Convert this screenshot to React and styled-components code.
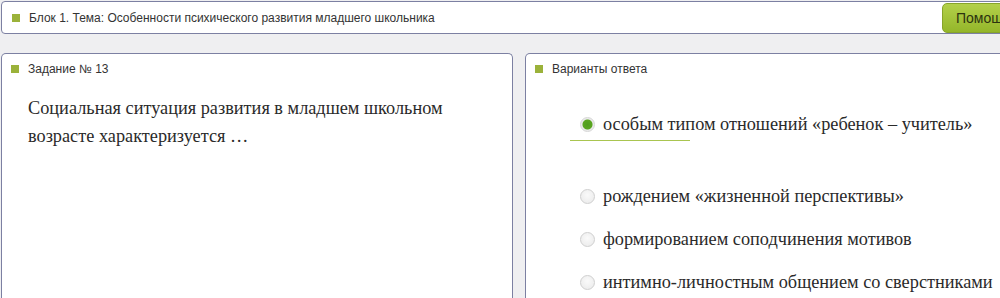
import React from 'react';
import styled, { createGlobalStyle } from 'styled-components';

const GlobalStyle = createGlobalStyle`
    html, body {
        margin: 0;
        padding: 0;
        overflow: hidden;
        background: #efeff1;
    }
    body {
        font-family: "Liberation Sans", Arial, sans-serif;
    }
`;

const Page = styled.div`
    width: 1100px;
    padding: 1px 0 0 1px;
    display: flex;
    flex-direction: column;
    gap: 19px;
`;

const TopBar = styled.div`
    height: 31px;
    display: flex;
    align-items: center;
    background: #fff;
    border: 1px solid #7c80a2;
    border-radius: 4px;
    padding-left: 10px;
    position: relative;
`;

const Square = styled.span`
    width: 8px;
    height: 8px;
    background: #9bb23a;
    flex: none;
`;

const Caption = styled.span`
    margin-left: 9px;
    font-size: 12px;
    color: #333;
`;

const HelpButton = styled.button`
    position: absolute;
    left: 940px;
    top: 1px;
    height: 30px;
    width: 110px;
    padding: 0 0 0 13px;
    text-align: left;
    border: 1px solid #87a42a;
    border-radius: 5px;
    background: linear-gradient(#b3d04a, #94b62a);
    font-family: "Liberation Sans", Arial, sans-serif;
    font-size: 14px;
    color: #2c3310;
`;

const Columns = styled.div`
    display: grid;
    grid-template-columns: 512px 512px;
    gap: 12px;
`;

const Panel = styled.div`
    height: 300px;
    background: #fff;
    border: 1px solid #7c80a2;
    border-bottom: none;
    border-radius: 5px 5px 0 0;
    padding: 9px 0 0 9px;
`;

const PanelHead = styled.div`
    display: flex;
    align-items: center;
    height: 11px;
`;

const Question = styled.p`
    margin: 20px 0 0 17px;
    width: 460px;
    font-family: "Liberation Serif", "Times New Roman", serif;
    font-size: 18.3px;
    line-height: 28px;
    color: #2a2a2a;
`;

const Options = styled.div`
    display: flex;
    flex-direction: column;
    padding: 29px 0 0 45px;
`;

const Option = styled.label`
    position: relative;
    display: flex;
    align-items: center;
    gap: 8px;
    height: 43px;
    margin-bottom: ${p => (p.$gap ? '29px' : '0')};
    font-family: "Liberation Serif", "Times New Roman", serif;
    font-size: 18.3px;
    color: #2a2a2a;
    white-space: nowrap;
`;

const Radio = styled.span`
    width: 13px;
    height: 13px;
    border-radius: 50%;
    flex: none;
    border: 1px solid ${p => (p.$on ? '#d6d6d6' : '#cfcfcf')};
    background: ${p =>
        p.$on
            ? 'radial-gradient(circle, #4f9d1c 0, #5aa520 4.5px, #e9e9e9 5.5px, #f6f6f6 100%)'
            : 'radial-gradient(circle at 50% 40%, #fafafa 0, #e9e9e9 100%)'};
`;

const Underline = styled.span`
    position: absolute;
    left: -10px;
    bottom: 5px;
    width: 120px;
    height: 1px;
    background: #a9c550;
`;

const answers = [
    'особым типом отношений «ребенок – учитель»',
    'рождением «жизненной перспективы»',
    'формированием соподчинения мотивов',
    'интимно-личностным общением со сверстниками',
];

const App = () => {
    return (
        <Page>
            <GlobalStyle />
            <TopBar>
                <Square />
                <Caption>Блок 1. Тема: Особенности психического развития младшего школьника</Caption>
                <HelpButton>Помощь</HelpButton>
            </TopBar>
            <Columns>
                <Panel>
                    <PanelHead>
                        <Square />
                        <Caption>Задание № 13</Caption>
                    </PanelHead>
                    <Question>
                        Социальная ситуация развития в младшем школьном возрасте характеризуется …
                    </Question>
                </Panel>
                <Panel>
                    <PanelHead>
                        <Square />
                        <Caption>Варианты ответа</Caption>
                    </PanelHead>
                    <Options>
                        {answers.map((a, i) => (
                            <Option key={a} $gap={i === 0}>
                                <Radio $on={i === 0} />
                                {a}
                                {i === 0 && <Underline />}
                            </Option>
                        ))}
                    </Options>
                </Panel>
            </Columns>
        </Page>
    );
};

export default App;
